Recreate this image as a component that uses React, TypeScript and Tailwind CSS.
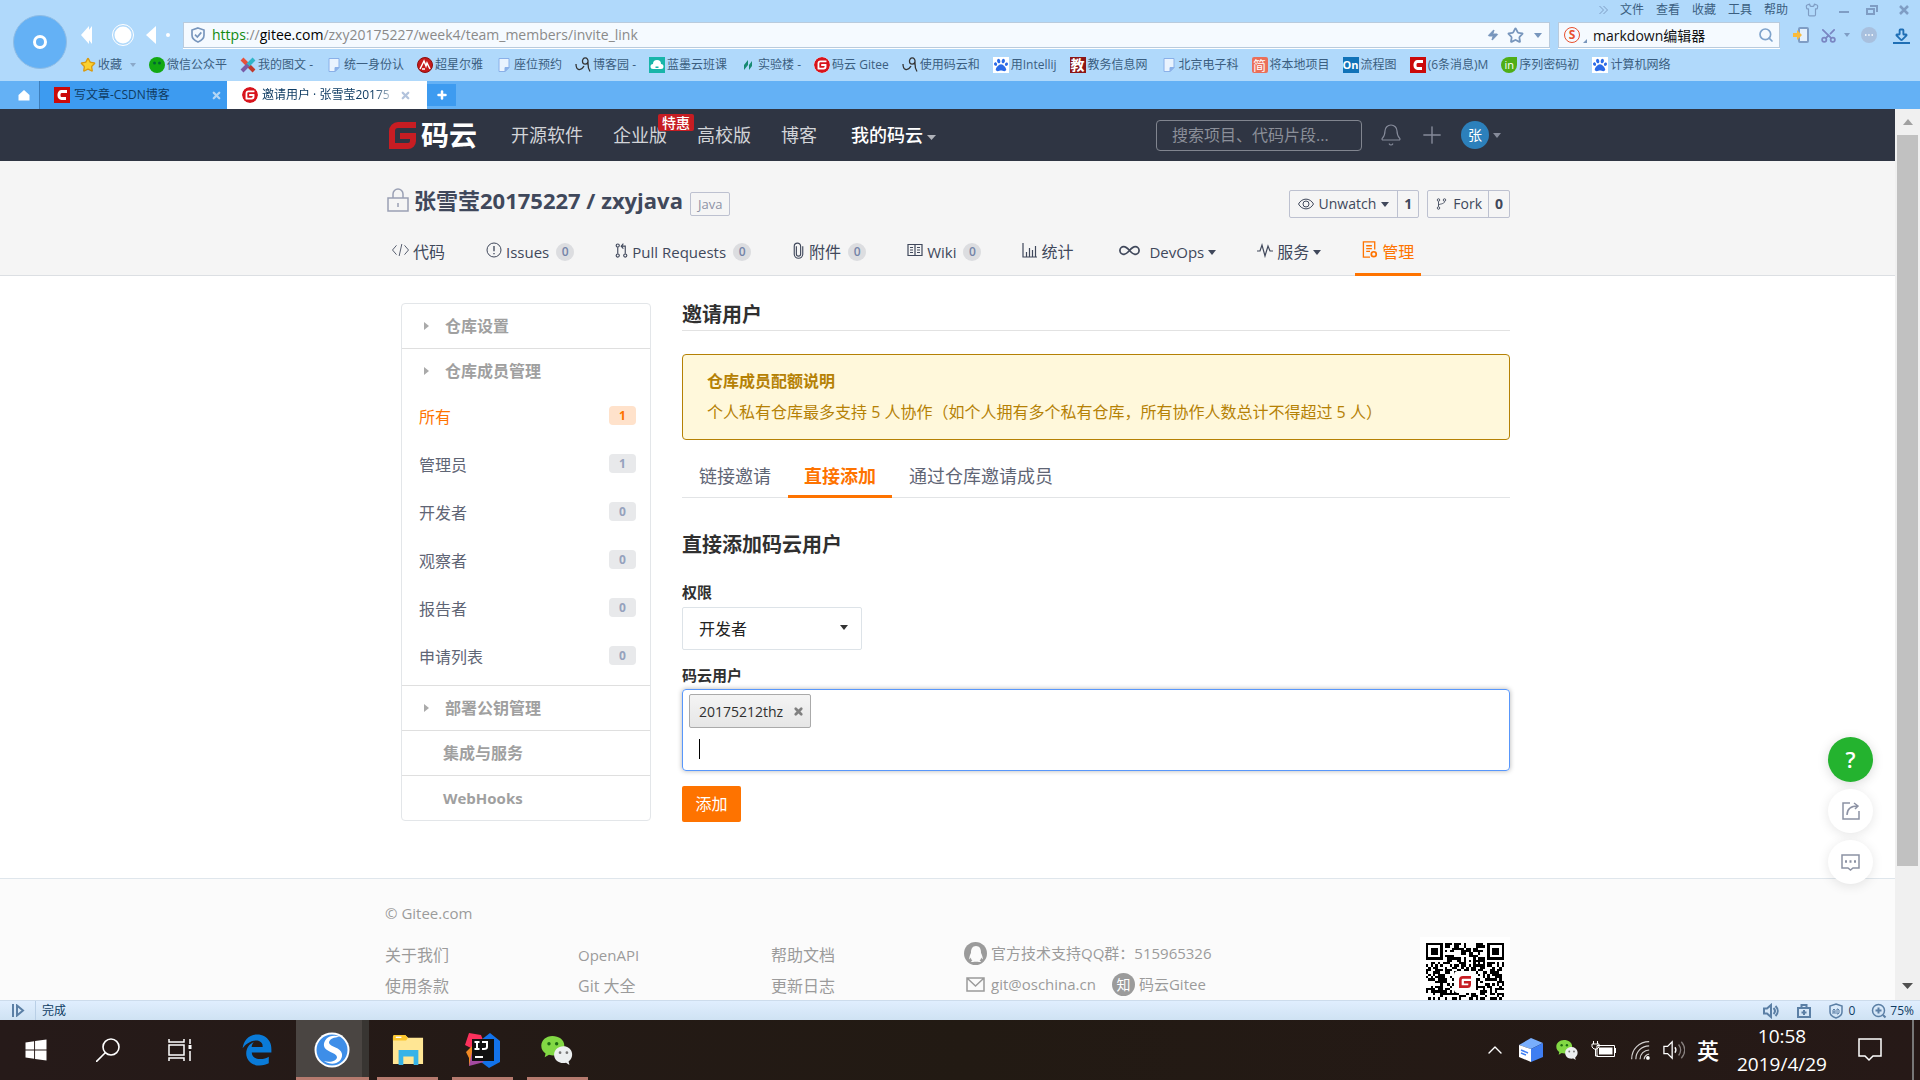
import React from 'react';
import { ArrowBigDown, Bell, ChevronUp, Infinity as InfinityIcon, Plus, Scissors, Search, Shirt, Star, X, Zap } from 'lucide-react';
import { FaEdgeLegacy, FaPaw, FaQq, FaWindows } from 'react-icons/fa';
import { AiFillWechat } from 'react-icons/ai';
import { SiGitee } from 'react-icons/si';

type IconProps = { className?: string; children?: React.ReactNode; sw?: number; box?: string };

// Shared outline icon wrapper
const Line = ({ className = '', children, sw = 1.5, box = '0 0 24 24' }: IconProps) => (
  <svg viewBox={box} className={`shrink-0 ${className}`} fill="none" stroke="currentColor" strokeWidth={sw} aria-hidden="true">
    {children}
  </svg>
);

const Caret = ({ className = 'h-[5px] w-[9px]' }: { className?: string }) => (
  <svg viewBox="0 0 10 6" preserveAspectRatio="none" className={`shrink-0 ${className}`} fill="currentColor" aria-hidden="true">
    <path d="M0 0h10L5 6z" />
  </svg>
);

const GiteeG = ({ className = '' }: { className?: string }) => (
  <svg viewBox="0 0 27 27" className={`shrink-0 ${className}`} fill="none" stroke="#c71d23" strokeWidth="6" aria-hidden="true">
    <path d="M27 3H9a6 6 0 0 0-6 6v15h16a5 5 0 0 0 5-5v-5H11" />
  </svg>
);

const PageIcon = () => (
  <Line className="mx-[2px] h-4 w-3" box="0 0 12 16" sw={1}>
    <path d="M1 1.500h10v9l-4 4H1z" fill="#e9f3fe" stroke="#8ab0e8" />
    <path d="M11 10.500H7v4z" fill="#8ab0e8" stroke="#8ab0e8" />
  </Line>
);

const CnblogIcon = () => (
  <Line className="h-4 w-4" box="0 0 16 16" sw={1.3}>
    <path d="M1 7c0 7 5 7 8 2" stroke="#333" />
    <path d="M13 4.500a2.800 3 0 1 0-5.500 0c0 3.500 5 3.500 5.500 0 0 4-.5 6 2 10" stroke="#333" />
  </Line>
);

const BaiduIcon = () => (
  <span className="flex h-4 w-4 shrink-0 items-center justify-center bg-white"><FaPaw className="h-[14px] w-[14px] text-[#2b6be8]" /></span>
);

const CsdnIcon = () => (
  <span className="flex h-4 w-4 shrink-0 items-center justify-center bg-[#cb0a0a]">
    <Line className="h-3 w-3" box="0 0 12 12" sw={3}>
      <path d="M11 2.500H5.500a2.500 3 0 0 0-2.500 3v1a2.500 3 0 0 0 2.500 3H10" stroke="#fff" />
    </Line>
  </span>
);

const GiteeRound = () => <SiGitee className="h-4 w-4 shrink-0 rounded-full bg-white text-[#d8141c]" />;

const WechatIcon = ({ className = '' }: { className?: string }) => (
  <svg viewBox="0 0 38 34" className={`shrink-0 ${className}`} aria-hidden="true">
    <path d="M13 0C5.500 0 0 5 0 11.500c0 4 2 7 5 9L4 25l5-3c10 3 18-3 18-10.500S20.500 0 13 0z" fill="#82d844" />
    <circle cx="9" cy="9" r="2" fill="#1d6b12" />
    <circle cx="18" cy="9" r="2" fill="#1d6b12" />
    <path d="M26 12c-6.500 0-11 4.500-11 10s5 11 14 9.500l4 2.500-1-4c8-6 4-18-6-18z" fill="#eceff0" />
    <circle cx="22" cy="19.500" r="1.600" fill="#777" />
    <circle cx="30" cy="19.500" r="1.600" fill="#777" />
  </svg>
);

const bookmarks = [
  {
    icon: (
      <span className="flex h-4 w-4 shrink-0 items-center justify-center rounded-full bg-[#12a812]">
        <Line className="h-4 w-4" box="0 0 16 16"><circle cx="5.500" cy="6" r="1.500" fill="#063" stroke="none" /><circle cx="10.500" cy="6" r="1.500" fill="#063" stroke="none" /></Line>
      </span>
    ),
    text: '微信公众平',
  },
  { icon: <Line className="h-4 w-4" sw={6}><path d="M3 3l9 9" stroke="#e8503a" /><path d="M12 12l9 9" stroke="#c0392b" /><path d="M21 3l-9 9" stroke="#2fb5c9" /><path d="M12 12l-9 9" stroke="#7a5ca8" /></Line>, text: '我的图文 -' },
  { icon: <PageIcon />, text: '统一身份认' },
  { icon: <Line className="h-4 w-4" box="0 0 16 16" sw={1.5}><circle cx="8" cy="8" r="7.500" fill="#c61a1a" stroke="#8a1010" strokeWidth="1" /><path d="M3 12l4-8 2 5 1-3 3 6M5 12h3" stroke="#fff" /></Line>, text: '超星尔雅' },
  { icon: <PageIcon />, text: '座位预约' },
  { icon: <CnblogIcon />, text: '博客园 -' },
  { icon: <Line className="h-4 w-4 bg-[#18b5a9]" box="0 0 16 16" sw={1}><path d="M4 12a2.500 2.500 0 0 1 0-5 4 4 0 0 1 8 0 2.500 2.500 0 0 1 0 5z" fill="#fff" stroke="none" /><path d="M6.500 9.500h3V11h-3z" fill="#18b5a9" stroke="none" /></Line>, text: '蓝墨云班课' },
  { icon: <Line className="h-4 w-4" box="0 0 16 16"><path d="M4 8l4-5v5l-4 5zM9 8l3-4v5l-3 4z" fill="#178a72" stroke="none" /></Line>, text: '实验楼 -' },
  { icon: <GiteeRound />, text: '码云 Gitee' },
  { icon: <CnblogIcon />, text: '使用码云和' },
  { icon: <BaiduIcon />, text: '用Intellij' },
  { icon: <span className="flex h-4 w-4 shrink-0 items-center justify-center bg-[#8c1616] text-[14px] leading-4 font-bold text-white">教</span>, text: '教务信息网' },
  { icon: <PageIcon />, text: '北京电子科' },
  { icon: <span className="flex h-4 w-4 shrink-0 items-center justify-center rounded-xs bg-[#ea6f5a] text-[13px] leading-4 text-white">简</span>, text: '将本地项目' },
  { icon: <span className="flex h-4 w-4 shrink-0 items-center justify-center bg-[#1173b8] text-[11px] leading-4 font-bold text-white">On</span>, text: '流程图' },
  { icon: <CsdnIcon />, text: '(6条消息)M' },
  { icon: <span className="flex h-4 w-4 shrink-0 items-center justify-center rounded-full rounded-tr-none bg-[#4fae16] text-[11px] leading-4 text-white">in</span>, text: '序列密码初' },
  { icon: <BaiduIcon />, text: '计算机网络' },
];

const BrowserTop = () => (
  <header className="shrink-0 bg-[#b0d9fb] text-[12px] text-[#3b5e80]">
    <div className="flex h-[81px] gap-[11px] pl-[13px]">
      <button aria-label="账户" className="mt-[15px] flex h-[54px] w-[54px] shrink-0 items-center justify-center rounded-full border border-[#8fbde6] bg-[#64b1f5]">
        <span className="h-[14px] w-[14px] rounded-full border-[3px] border-white" />
      </button>
      <div className="min-w-0 flex-1">
        <div className="flex h-[19px] items-center justify-end gap-3 pr-2 leading-[19px]">
          <Line className="h-2 w-[9px] text-[#7f9dc4]" box="0 0 9 8" sw={1}><path d="M.5 0l4 4-4 4M4.500 0l4 4-4 4" /></Line>
          {['文件', '查看', '收藏', '工具', '帮助'].map((m) => <button key={m}>{m}</button>)}
          <Shirt className="ml-1 h-[14px] w-[16px] text-[#7f9dc4]" />
          <Line className="ml-1 h-3 w-4 text-[#7f9dc4]" sw={2} box="0 0 16 12"><path d="M3 8h10" /></Line>
          <Line className="h-3 w-4 text-[#7f9dc4]" box="0 0 16 12" sw={2}><path d="M3 5h7v5H3zM6 2h7v6" /></Line>
          <Line className="ml-1 h-3 w-4 text-[#7f9dc4]" box="0 0 16 12" sw={2.5}><path d="M4 2l8 8M12 2l-8 8" /></Line>
        </div>
        <div className="mt-[3px] flex h-[26px] items-center text-white">
          <svg viewBox="-2 0 80 24" className="h-6 w-20 shrink-0" fill="currentColor" aria-hidden="true">
            <path d="M1 12l8-9v18zM5 12l7-9v18z" />
            <circle cx="43" cy="12" r="8.500" />
            <circle cx="43" cy="12" r="10.500" fill="none" stroke="currentColor" />
            <path d="M66 12l10-9v18z" />
          </svg>
          <span className="mr-[13px] ml-[8px] h-1 w-1 rounded-full bg-white" />
          <div className="flex h-[26px] min-w-0 flex-1 items-center border border-[#b9cbdd] bg-[#f5faff] pr-[3px] pl-[6px] shadow-[0_1px_0_#fff]">
            <Line className="h-4 w-4 text-[#7896bd]" sw={2.5}><path d="M12 1.500l9 3v8c0 5-4 8-9 10-5-2-9-5-9-10v-8z" /><path d="M7.500 11.500l3.500 3.500 6-7" /></Line>
            <p className="ml-[6px] flex-1 truncate text-[14px] leading-[24px] text-[#8a8a8a]">
              <span className="text-[#108a10]">https</span>://<span className="text-black">gitee.com</span>/zxy20175227/week4/team_members/invite_link
            </p>
            <Zap className="h-4 w-3 fill-[#7896bd] text-[#7896bd]" />
            <Star className="ml-[8px] h-[17px] w-[17px] text-[#7896bd]" strokeWidth={2.5} />
            <Caret className="mr-[4px] ml-[10px] h-[5px] w-[8px] text-[#7896bd]" />
          </div>
          <div className="ml-2 flex h-[26px] w-[222px] items-center border border-[#b9cbdd] bg-[#f5faff] px-[5px] shadow-[0_1px_0_#fff]">
            <span className="flex h-4 w-4 items-center justify-center rounded-full border border-[#e8502e] text-[12px] leading-[14px] font-bold text-[#e8502e]">S</span>
            <Line className="mt-3 ml-[3px] h-1 w-1 text-[#7896bd]" box="0 0 4 4"><path d="M4 0v4H0z" fill="currentColor" stroke="none" /></Line>
            <input aria-label="搜索" defaultValue="markdown编辑器" className="ml-[6px] w-0 flex-1 bg-transparent text-[14px] text-[#111] outline-none" />
            <Search className="h-4 w-4 text-[#7fa3cc]" strokeWidth={2.5} />
          </div>
          <div className="flex w-[140px] items-center pl-[12px]">
            <Line className="h-[18px] w-[18px] text-[#7f9dc4]" box="0 0 18 18" sw={2}><rect x="7" y="2" width="9" height="14" rx="1" fill="#e3f0fd" /><path d="M1 7h4V4l5 5-5 5v-3H1z" fill="#f9bb3c" stroke="none" /></Line>
            <Scissors className="ml-[10px] h-[17px] w-[17px] rotate-[-90deg] text-[#7a86c2]" strokeWidth={2.5} />
            <Caret className="ml-[7px] h-[4px] w-[6px] text-[#7f9dc4]" />
            <Line className="ml-[11px] h-4 w-4 text-white" box="0 0 16 16"><circle cx="8" cy="8" r="8" fill="#a8c0de" stroke="none" /><path d="M4 8h1.500M7.200 8h1.500M10.500 8H12" /></Line>
            <span className="ml-[16px] flex w-[17px] flex-col items-center border-b-2 border-[#1f6fb5]"><ArrowBigDown className="h-[15px] w-[15px] text-[#1f6fb5]" strokeWidth={3} /></span>
          </div>
        </div>
        <nav className="mt-[8px] flex h-[18px] items-center gap-[13px] pl-[2px] leading-[18px] whitespace-nowrap">
          <a href="#" className="flex items-center gap-[2px]">
            <Star className="h-4 w-4 fill-[#fcd12f] text-[#d99a12]" />收藏
            <Caret className="ml-[6px] h-[4px] w-[6px] text-[#8ba9c9]" />
          </a>
          {bookmarks.map((b, i) => (
            <a key={i} href="#" className="flex items-center gap-[2px]">{b.icon}{b.text}</a>
          ))}
        </nav>
      </div>
    </div>
    <div className="flex h-[28px] items-stretch bg-[#64b1f5] text-[#0f3c63]">
      <button aria-label="主页" className="flex w-10 items-center justify-center border-r border-[#3d7fbd] pl-[8px]">
        <Line className="h-3 w-3 text-white" box="0 0 12 12"><path d="M6 1l5.500 5v5.500h-11V6z" fill="currentColor" stroke="none" /></Line>
      </button>
      <div className="flex w-[187px] items-center bg-[#3d9bf0] pr-[5px] pl-[14px]">
        <CsdnIcon /><span className="ml-1 flex-1">写文章-CSDN博客</span>
        <X className="h-[11px] w-[11px] text-[#b4d6f5]" strokeWidth={5} />
      </div>
      <div className="flex w-[200px] items-center bg-white pr-[16px] pl-[15px]">
        <GiteeRound />
        <span className="mr-[2px] ml-1 flex-1 overflow-hidden whitespace-nowrap [mask-image:linear-gradient(to_right,black_82%,transparent)]">邀请用户 · 张雪莹20175</span>
        <X className="h-[11px] w-[11px] text-[#b3c3dc]" strokeWidth={5} />
      </div>
      <button aria-label="新标签" className="my-[3px] flex w-[29px] items-center justify-center bg-[#3d9bf0]"><Plus className="h-3 w-3 text-white" strokeWidth={5} /></button>
    </div>
  </header>
);

const SiteNav = () => (
  <div className="h-[52px] bg-[#2f3543]">
    <div className="mx-auto flex h-[52px] max-w-[1125px] items-center pl-1 text-[18px] text-[#d2d4d8]">
      <a href="#" className="flex items-center gap-[5px] text-[28px] leading-[32px] font-bold text-white"><GiteeG className="h-[27px] w-[27px]" />码云</a>
      <nav className="ml-[34px] flex items-center gap-[30px] leading-[26px]">
        <a href="#">开源软件</a>
        <a href="#" className="relative">企业版
          <span className="absolute -top-[8px] left-[45px] rounded-xs bg-[#c71d23] px-[4px] text-[14px] leading-[17px] font-medium whitespace-nowrap text-white">特惠</span>
        </a>
        <a href="#">高校版</a>
        <a href="#">博客</a>
        <a href="#" className="ml-1 flex items-center gap-1 font-medium text-white">我的码云<Caret className="mt-1 h-[5px] w-[9px] text-[#b0b3ba]" /></a>
      </nav>
      <input aria-label="搜索项目" placeholder="搜索项目、代码片段..." className="ml-auto h-[31px] w-[206px] rounded-sm border border-[#81858f] bg-transparent px-[15px] text-[16px] outline-none placeholder:text-[#8b8f99]" />
      <Bell className="ml-[17px] h-6 w-6 text-[#868b9a]" strokeWidth={1.2} />
      <Plus className="ml-[15px] h-7 w-7 text-[#868b9a]" strokeWidth={1.2} />
      <span className="ml-[15px] flex h-7 w-7 items-center justify-center rounded-full bg-[#2c80bb] text-[14px] leading-7 text-white">张</span>
      <Caret className="mr-[9px] ml-1 h-[5px] w-[8px] text-[#868b9a]" />
    </div>
  </div>
);

const tabs = [
  { text: '代码', icon: <Line className="h-4 w-[17px]" sw={1.3}><path d="M6 5l-6 7 6 7M18 5l6 7-6 7M14 3l-4 18" /></Line> },
  { text: 'Issues', count: 0, icon: <Line className="h-4 w-4"><circle cx="12" cy="12" r="10.500" /><path d="M12 6v8M12 16.500v2" strokeWidth="2" /></Line> },
  { text: 'Pull Requests', count: 0, icon: <Line className="h-[15px] w-[13px]" box="0 0 20 24" sw={1.8}><circle cx="4" cy="4" r="2.500" /><circle cx="4" cy="20" r="2.500" /><circle cx="16" cy="20" r="2.500" /><path d="M4 7v10M16 17V5h-6M13 1L9.500 5l3.500 4" /></Line> },
  { text: '附件', count: 0, icon: <Line className="h-[17px] w-[13px]" box="0 0 14 24" sw={1.6}><path d="M4 6v11a3 3 0 0 0 6 0V6a4.500 4.500 0 0 0-9 0v11a6 6 0 0 0 12 0V6" /></Line> },
  { text: 'Wiki', count: 0, icon: <Line className="h-4 w-4" box="0 0 16 16" sw={1.2}><path d="M1 2.500h14v11H1zM8 2.500v11M3 5.500h3M3 8h3M3 10.500h3M10 5.500h3M10 8h3M10 10.500h3" /></Line> },
  { text: '统计', icon: <Line className="h-[15px] w-[15px]" box="0 0 15 15" sw={1.2}><path d="M1 0v14h14M4.500 14V9M7.500 14V5M10.500 14V7M13.500 14V3" /></Line> },
  { text: 'DevOps', menu: true, wide: true, icon: <InfinityIcon className="h-[23px] w-[23px]" strokeWidth={1.8} /> },
  { text: '服务', menu: true, icon: <Line className="h-4 w-4" box="0 0 16 16" sw={1.2}><path d="M0 9h3l2-6 3 11 3-10 2 5h3" /></Line> },
  { text: '管理', active: true, icon: <Line className="h-[17px] w-[16px]" box="0 0 16 18" sw={1.4}><path d="M8 17H1V1h12v8M4 5h6M4 8h6M4 11h4" /><circle cx="12" cy="14" r="2.600" strokeWidth="1.800" /></Line> },
];

const RepoHeader = () => (
  <div className="border-b border-[#dcdfe3] bg-[#f5f5f5]">
    <div className="mx-auto flex h-[114px] max-w-[1125px] flex-col text-[#40485b]">
      <div className="flex h-[68px] items-center pt-[10px]">
        <Line className="ml-[2px] h-6 w-[22px] text-[#9aa0b4]" box="0 0 22 24"><path d="M1 10h20v13H1zM6 10V6a5 5 0 0 1 10 0v4M11 15v4" /></Line>
        <h1 className="ml-[5px] text-[22px] leading-[32px] font-bold">张雪莹20175227 / zxyjava</h1>
        <span className="mt-[7px] ml-[7px] rounded-xs border border-[#bdc1d0] px-[7px] text-[13px] leading-[22px] text-[#8d92a5]">Java</span>
        <div className="mt-2 ml-auto flex h-[28px] items-stretch rounded-xs border border-[#bdc1d0] text-[14px] leading-[26px]">
          <button className="flex items-center gap-[5px] px-2">
            <Line className="h-4 w-4" box="0 0 16 16" sw={1}><path d="M.5 8C4 1.500 12 1.500 15.500 8 12 14.500 4 14.500.5 8z" /><circle cx="8" cy="8" r="3" /></Line>
            Unwatch<Caret className="h-[5px] w-[8px]" />
          </button>
          <span className="w-[21px] border-l border-[#bdc1d0] text-center font-bold">1</span>
        </div>
        <div className="mt-2 ml-2 flex h-[28px] items-stretch rounded-xs border border-[#bdc1d0] text-[14px] leading-[26px]">
          <button className="flex items-center gap-[6px] pr-[6px] pl-2">
            <Line className="h-3 w-[11px]" box="0 0 20 24" sw={1.8}><circle cx="4" cy="4" r="2.500" /><circle cx="16" cy="4" r="2.500" /><circle cx="4" cy="20" r="2.500" /><path d="M4 7v10M16 7c0 6-12 4-12 8" /></Line>
            Fork
          </button>
          <span className="w-[21px] border-l border-[#bdc1d0] text-center font-bold">0</span>
        </div>
      </div>
      <nav className="-mb-px flex flex-1 gap-[27px] text-[15px] leading-[24px]">
        {tabs.map((t) => (
          <a
            key={t.text}
            href="#"
            className={`flex items-center px-[7px] pb-[1px] ${t.active ? 'border-b-[3px] border-[#fe7300] pt-[2px] text-[#fe7300]' : ''} ${t.wide ? 'ml-1' : ''}`}
          >
            <span className="-mt-1 mr-1 flex">{t.icon}</span>
            <span className={/^[A-Z]/.test(t.text) ? (t.wide ? 'ml-1' : '') : 'text-[16px]'}>{t.text}</span>
            {t.count !== undefined && (
              <span className="ml-[7px] h-[18px] w-[18px] rounded-full bg-[#dcdde0] text-center text-[12px] leading-[18px] font-semibold text-[#7484a8]">{t.count}</span>
            )}
            {t.menu && <Caret className="ml-1 h-[5px] w-[8px]" />}
          </a>
        ))}
      </nav>
    </div>
  </div>
);

const members = [
  { name: '所有', count: 1, active: true },
  { name: '管理员', count: 1 },
  { name: '开发者', count: 0 },
  { name: '观察者', count: 0 },
  { name: '报告者', count: 0 },
  { name: '申请列表', count: 0 },
];

const Arrow = () => (
  <svg viewBox="0 0 5 8" className="mr-4 h-[8px] w-[5px]" fill="#aaa" aria-hidden="true"><path d="M0 0l5 4-5 4z" /></svg>
);

const Sidebar = () => (
  <aside className="w-[250px] shrink-0 rounded-sm border border-[#e3e6e9] text-[16px] leading-[24px]">
    <a href="#" className="flex h-[45px] items-center border-b border-[#dfdfdf] pl-[22px] font-bold text-[#a0a0a0]"><Arrow />仓库设置</a>
    <a href="#" className="flex h-[44px] items-center pl-[22px] font-bold text-[#a0a0a0]"><Arrow />仓库成员管理</a>
    <ul className="pb-[4px]">
      {members.map((m) => (
        <li key={m.name}>
          <a href="#" className={`flex h-[48px] items-center justify-between pr-[14px] pl-[17px] ${m.active ? 'text-[#fe7300]' : 'text-[#5f6575]'}`}>
            {m.name}
            <span className={`mb-[3px] h-[19px] w-[27px] rounded-sm text-center text-[12px] leading-[19px] font-bold ${m.active ? 'bg-[#ffe2cb] text-[#fe7300]' : 'bg-[#e8e9eb] text-[#96a2bd]'}`}>{m.count}</span>
          </a>
        </li>
      ))}
    </ul>
    <a href="#" className="flex h-[45px] items-center border-t border-[#dfdfdf] pl-[22px] font-bold text-[#a0a0a0]"><Arrow />部署公钥管理</a>
    <a href="#" className="flex h-[45px] items-center border-t border-[#dfdfdf] pl-[41px] font-bold text-[#a0a0a0]">集成与服务</a>
    <a href="#" className="flex h-[45px] items-center border-t border-[#dfdfdf] pl-[41px] text-[15px] font-bold text-[#a0a0a0]">WebHooks</a>
  </aside>
);

const InviteForm = () => (
  <section className="min-w-0 flex-1 text-[#303030]">
    <h2 className="border-b border-[#e2e2e2] pb-[3px] text-[20px] leading-[24px] font-bold">邀请用户</h2>
    <div className="mt-[23px] h-[86px] rounded-sm border border-[#b58105] bg-[#fff8db] px-[24px] pt-[10px] text-[16px] text-[#b58105]">
      <h3 className="leading-[32px] font-bold">仓库成员配额说明</h3>
      <p className="leading-[30px]">个人私有仓库最多支持 5 人协作（如个人拥有多个私有仓库，所有协作人数总计不得超过 5 人）</p>
    </div>
    <div className="mt-[15px] flex h-[43px] border-b border-[#e2e4e6] text-[18px] leading-[43px] text-[#5f6575]">
      <a href="#" className="px-[17px]">链接邀请</a>
      <a href="#" className="-mb-px border-b-[3px] border-[#fe7300] px-4 font-bold text-[#fe7300]">直接添加</a>
      <a href="#" className="px-[17px]">通过仓库邀请成员</a>
    </div>
    <h3 className="mt-[32px] text-[20px] leading-[30px] font-bold">直接添加码云用户</h3>
    <form className="mt-[20px]">
      <label htmlFor="role" className="block text-[15px] leading-[24px] font-bold">权限</label>
      <div className="relative mt-[3px] w-[180px]">
        <select id="role" className="h-[43px] w-full appearance-none rounded-xs border border-[#dde3e8] bg-white px-4 text-[16px] text-[#222]">
          <option>开发者</option>
        </select>
        <Caret className="pointer-events-none absolute top-[18px] right-[14px] h-[5px] w-[8px] text-[#333]" />
      </div>
      <label htmlFor="user" className="mt-[13px] block text-[15px] leading-[24px] font-bold">码云用户</label>
      <div className="mt-[2px] h-[82px] rounded-sm border border-[#5897fb] px-[6px] pt-[4px] shadow-[0_0_5px_rgba(0,0,0,0.3)]">
        <div className="flex h-[34px]">
          <span className="flex items-center rounded-xs border border-[#aaa] bg-linear-to-b from-[#f4f4f4] to-[#e6e6e6] pr-[6px] pl-[9px] text-[14px]">
            20175212thz
            <button type="button" aria-label="移除" className="ml-[10px] text-[#808080]"><X className="h-[11px] w-[11px]" strokeWidth={6} /></button>
          </span>
        </div>
        <div className="flex h-[42px] items-center pl-[10px]">
          <span className="h-5 w-px bg-black" />
          <input id="user" className="flex-1 bg-transparent text-[16px] outline-none" />
        </div>
      </div>
      <button type="button" className="mt-[15px] block h-[36px] w-[59px] rounded-xs bg-[#fe7300] text-[16px] text-white">添加</button>
    </form>
  </section>
);

// 33x33 module grid with three finder squares
const QR = 33;
const finder = (x: number, y: number, ox: number, oy: number) => {
  const dx = x - ox;
  const dy = y - oy;
  if (dx < -1 || dx > 7 || dy < -1 || dy > 7) return null;
  if (dx < 0 || dx > 6 || dy < 0 || dy > 6) return false;
  return dx === 0 || dx === 6 || dy === 0 || dy === 6 || (dx > 1 && dx < 5 && dy > 1 && dy < 5);
};
let qrPath = '';
let seed = 77;
for (let y = 0; y < QR; y++) {
  for (let x = 0; x < QR; x++) {
    seed = (seed * 1103515245 + 12345) % 2147483648;
    const on = finder(x, y, 0, 0) ?? finder(x, y, QR - 7, 0) ?? finder(x, y, 0, QR - 7) ?? seed / 2147483648 > 0.46;
    if (on) qrPath += `M${x} ${y}h1v1h-1z`;
  }
}

const Footer = () => (
  <footer className="border-t border-[#dfe6ec] bg-[#fbfbfb] text-[#9b9b9b]">
    <div className="mx-auto max-w-[1125px] pt-[22px] text-[16px]">
      <p className="text-[15px] leading-[24px]">© Gitee.com</p>
      <div className="mt-[12px] flex">
        {[['关于我们', '使用条款'], ['OpenAPI', 'Git 大全'], ['帮助文档', '更新日志']].map((col) => (
          <ul key={col[0]} className="w-[193px] pt-[3px] leading-[31px]">
            {col.map((c) => <li key={c}><a href="#" className={c === 'OpenAPI' ? 'text-[15px]' : ''}>{c}</a></li>)}
          </ul>
        ))}
        <div className="text-[15px] leading-[31px]">
          <p className="mt-[1px] flex items-center gap-1">
            <span className="flex h-[23px] w-[23px] items-center justify-center rounded-full bg-[#9b9b9b] text-[#fbfbfb]"><FaQq className="h-[16px] w-[14px]" /></span>
            官方技术支持QQ群：515965326
          </p>
          <p className="flex items-center gap-1">
            <Line className="mr-[2px] ml-[2px] h-[15px] w-[19px]" box="0 0 19 15"><path d="M1 1h17v13H1zM1 1l8.500 8L18 1" /></Line>
            <a href="#">git@oschina.cn</a>
            <span className="ml-[12px] flex h-[23px] w-[23px] items-center justify-center rounded-full bg-[#9b9b9b] text-[14px] leading-[23px] text-white">知</span>
            <a href="#">码云Gitee</a>
          </p>
        </div>
        <div className="relative ml-auto h-[90px] w-[90px] bg-white p-[6px]">
          <svg viewBox="0 0 33 33" className="h-[78px] w-[78px]" shapeRendering="crispEdges" aria-label="QR"><path d={qrPath} /></svg>
          <span className="absolute top-[34px] left-[34px] flex h-[22px] w-[22px] items-center justify-center rounded-sm bg-white"><GiteeG className="h-3 w-3" /></span>
        </div>
      </div>
    </div>
  </footer>
);

const FloatButtons = () => (
  <div className="absolute right-[22px] bottom-[116px] flex flex-col gap-[7px] text-[#8c92a4]">
    <button className="flex h-[45px] w-[45px] items-center justify-center rounded-full bg-[#24b32f] text-[22px] leading-[45px] font-semibold text-white shadow-[0_2px_12px_rgba(0,0,0,0.15)]">?</button>
    <button aria-label="分享" className="flex h-[44px] w-[45px] items-center justify-center rounded-full bg-white shadow-[0_2px_12px_rgba(0,0,0,0.1)]">
      <Line className="h-[18px] w-[18px]" box="0 0 18 18"><path d="M8 1H1v16h16V9M5 13c0-6 4-9 11-9M12 1l4 3-3 3" /></Line>
    </button>
    <button aria-label="反馈" className="flex h-[44px] w-[45px] items-center justify-center rounded-full bg-white shadow-[0_2px_12px_rgba(0,0,0,0.1)]">
      <Line className="h-[18px] w-[19px]" box="0 0 19 18"><path d="M1 2h17v13h-6l-2.500 2L7 15H1z" /><path d="M4 8.500h2M8.500 8.500h2M13 8.500h2" strokeWidth="2.500" /></Line>
    </button>
  </div>
);

const StatusBar = () => (
  <div className="flex h-5 shrink-0 items-center border-t border-[#cddcec] bg-linear-to-b from-[#e0eefe] to-[#cfe2f3] text-[12px] leading-[19px] text-[#0f3c63]">
    <span className="flex h-full w-9 items-center justify-center border-r border-[#b9cfe6]">
      <Line className="h-[13px] w-[14px] text-[#5b7fa5]" box="0 0 14 13" sw={2}><path d="M2 0v13M6 1.500v10l6-5z" /></Line>
    </span>
    <span className="ml-[6px] flex-1">完成</span>
    <div className="flex items-center pr-[6px] text-[#5b7fa5]">
      <Line className="h-4 w-4" box="0 0 16 16" sw={2}><path d="M1 5.500h3L8 2v12l-4-3.500H1zM10.500 5c2 2 2 4 0 6M12.500 3c3 3 3 7 0 10" /></Line>
      <Line className="ml-[17px] h-4 w-4" box="0 0 16 16" sw={2}><path d="M2 5h12v9H2zM5.500 5V2h5v3M8 7v5M5.500 9.500h5" /></Line>
      <Line className="ml-[16px] h-4 w-4" box="0 0 16 16"><path d="M8 1l6 2v6c0 3-3 5-6 6-3-1-6-3-6-6V3z" /><path d="M5 11V7l1-1 1 1v4M5 9h2M9 6v5h1l1-1V7l-1-1z" strokeWidth="1" /></Line>
      <span className="ml-[4px] text-[#0f3c63]">0</span>
      <Line className="ml-[16px] h-4 w-4" box="0 0 16 16"><circle cx="7.500" cy="7.500" r="6" /><path d="M12 12l2.500 2.500M7.500 4.500v6M4.500 7.500h6" strokeWidth="2" /></Line>
      <span className="ml-[3px] text-[#0f3c63]">75%</span>
    </div>
  </div>
);

const apps = [
  <svg viewBox="0 0 34 32" className="h-8 w-8"><path d="M1 2a2 2 0 0 1 2-2h11l3 3h16v28H1z" fill="#ffe694" /><path d="M1 2a2 2 0 0 1 2-2h11l3 3-2 3H1z" fill="#fcc62d" /><path d="M4 2.500h6" stroke="#fff" strokeWidth="1.500" /><path d="M7 32V16h21v16h-5v-9H12v9z" fill="#36b3e8" /></svg>,
  <svg viewBox="0 0 36 36" className="h-9 w-9"><path d="M4 1l12 2 4 10-8 6L0 13z" fill="#fc315c" /><path d="M25 1l10 8v21l-11 6-8-6V8z" fill="#1273eb" /><path d="M1 20l6-6 4 10-7 10 0-8z" fill="#f08a24" /><path d="M4 34l3-14 12 10z" fill="#a44aa0" /><path d="M7 7h22v22H7z" fill="#111" /><path d="M9.500 10h5M9.500 17h5M12 10v7M17 10h5v5q0 2-3 2h-2" stroke="#fff" strokeWidth="2" fill="none" /><path d="M10 25h8" stroke="#fff" strokeWidth="2" /></svg>,
  <WechatIcon className="h-[29px] w-[37px]" />,
];

const Taskbar = () => (
  <div className="flex h-[60px] shrink-0 items-stretch bg-linear-to-r from-[#261a19] via-[#221a13] to-[#261917] text-white">
    <button aria-label="开始" className="flex w-[72px] items-center justify-center"><FaWindows className="h-6 w-6" /></button>
    <button aria-label="搜索" className="flex w-[72px] items-center justify-center"><Line className="h-6 w-6" sw={1.6}><circle cx="15" cy="9" r="8" /><path d="M9.500 14.500L0 24" /></Line></button>
    <button aria-label="任务视图" className="flex w-[72px] items-center justify-center">
      <Line className="h-6 w-6"><path d="M1 7h15v10H1zM1 1v3h15V1M1 23v-3h15v3M22 1v5M22 13v10" /><path d="M22 7v4" strokeWidth="3" /></Line>
    </button>
    <button aria-label="Edge" className="flex w-20 items-center justify-center pl-[2px]"><FaEdgeLegacy className="h-[32px] w-[32px] text-[#0a7bd8]" /></button>
    <div className="flex w-[73px] border-b-[3px] border-[#b57a6e] bg-[#383532]">
      <button aria-label="浏览器" className="flex w-[66px] items-center justify-center bg-[#4a4542] pt-[3px]">
        <svg viewBox="0 0 36 36" className="ml-[6px] h-9 w-9"><circle cx="18" cy="18" r="17.500" fill="#fff" /><circle cx="18" cy="18" r="15.500" fill="#3e8ee8" /><path d="M26 5C17 1 9 7 10 14c1 6 12 6 13 11 0 4-7 6-13 4 9 6 19 1 18-7-1-7-12-7-13-11 0-4 5-6 11-6z" fill="#fff" /></svg>
      </button>
    </div>
    <div className="ml-2 flex gap-[14px]">
      {apps.map((a, i) => (
        <button key={i} aria-label="应用" className="flex w-[61px] items-center justify-center border-b-[3px] border-[#b57a6e] pt-[3px]">{a}</button>
      ))}
    </div>
    <div className="ml-auto flex items-center">
      <ChevronUp className="h-6 w-6" strokeWidth={1.4} />
      <Line className="ml-[12px] h-6 w-6" sw={2}><path d="M0 7l12-7 12 5-12 6z" fill="#79aefc" stroke="none" /><path d="M0 7l12 4v13L0 19z" fill="#fff" stroke="none" /><path d="M24 5v14l-12 5V11z" fill="#3f7ef2" stroke="none" /><path d="M2 12l7 3M2 15l5 2" stroke="#3f7ef2" strokeWidth="1.500" /></Line>
      <WechatIcon className="ml-[12px] h-5 w-[25px]" />
      <Line className="ml-[11px] h-[18px] w-[25px]" box="0 0 25 18" sw={1}><path d="M6 4.500h17.500v11H6z" /><path d="M8 6.500h13.500v7H8z" fill="#fff" stroke="none" /><path d="M24.500 7v5M2.500 0v3M6.500 0v3M1 3h7v3l-2 2H3L1 6zM4.500 8v7H7" /></Line>
      <Line className="ml-[14px] h-5 w-5" sw={1.4}><path d="M2 23C2 11 11 2 23 2M7 23C7 14 14 7 23 7M12 23c0-6 5-11 11-11M17 23c0-3 3-6 6-6" opacity=".8" /><circle cx="21.500" cy="21.500" r="1.500" fill="#fff" /></Line>
      <Line className="ml-[13px] h-[22px] w-[22px]" sw={1.4}><path d="M1 8h4l5-5v18l-5-5H1zM13 9c1.500 2 1.500 4 0 6" /><path d="M17 6c3 4 3 8 0 12M20 3c5 6 5 12 0 18" opacity=".45" /></Line>
      <span className="ml-[12px] text-[22px] leading-[30px] font-medium">英</span>
      <div className="ml-[16px] w-[94px] text-center text-[19px] leading-[28px]">
        <p>10:58</p>
        <p>2019/4/29</p>
      </div>
      <Line className="ml-[29px] h-6 w-6"><path d="M1 1h22v17h-8l-4 4-4-4H1z" /></Line>
      <span className="mr-[6px] ml-[30px] h-[60px] w-[2px] bg-[#777]" />
    </div>
  </div>
);

const App = () => (
  <div className="flex h-screen flex-col overflow-hidden bg-white font-['Open_Sans','Noto_Sans_CJK_SC',sans-serif]">
    <BrowserTop />
    <div className="flex min-h-0 flex-1">
      <div className="relative min-w-0 flex-1 overflow-hidden">
        <SiteNav />
        <RepoHeader />
        <main className="mx-auto flex max-w-[1125px] items-start gap-[31px] pt-[27px] pb-[56px] pl-4">
          <Sidebar />
          <InviteForm />
        </main>
        <Footer />
        <FloatButtons />
      </div>
      <div className="flex w-[25px] shrink-0 flex-col items-center bg-[#f0f0f0]">
        <Caret className="my-[10px] h-[6px] w-[10px] rotate-180 text-[#a0a0a0]" />
        <div className="w-[21px] flex-1 bg-[#c1c1c1]" />
        <div className="flex h-[134px] flex-col justify-end pb-[11px]"><Caret className="h-[6px] w-[11px] text-[#505050]" /></div>
      </div>
    </div>
    <StatusBar />
    <Taskbar />
  </div>
);

export default App;
